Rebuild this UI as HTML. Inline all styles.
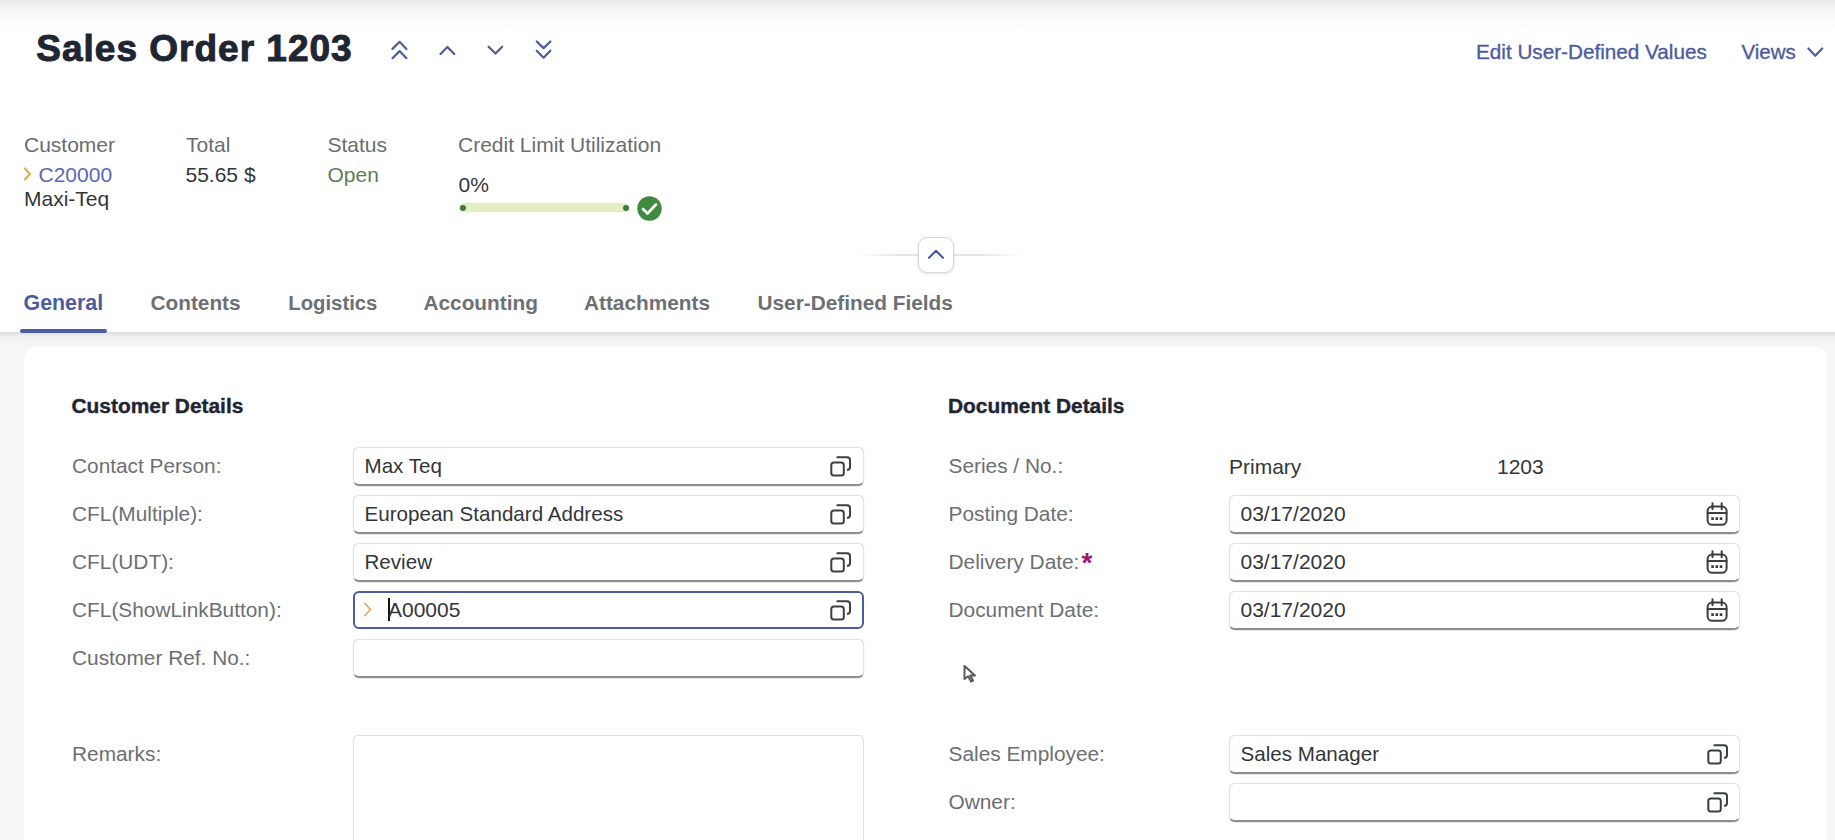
<!DOCTYPE html>
<html><head><meta charset="utf-8">
<style>
*{box-sizing:border-box;margin:0;padding:0}
html,body{width:1835px;height:840px;overflow:hidden;background:#f6f6f9;font-family:"Liberation Sans",sans-serif;color:#32363a}
.abs{position:absolute;white-space:nowrap;line-height:1}
#hdr{position:absolute;left:0;top:0;width:1835px;height:332px;background:#fff;box-shadow:0 0 3px rgba(0,0,0,.06)}
#hshadow{position:absolute;left:0;top:332px;width:1835px;height:14px;background:linear-gradient(#dcdcde 0,#e4e4e6 1.5px,#eeeef1 4px,#f3f3f6 8px,#f6f6f9 14px)}
#topgrad{position:absolute;left:0;top:0;width:1835px;height:36px;background:linear-gradient(#eaeaea 0,#ececec 3px,#f1f1f1 7px,#f7f7f7 12px,#fafafa 20px,#fdfdfd 28px,#fff 36px)}
.title{font-weight:bold;font-size:37px;color:#1f2633;left:36.3px;top:30.2px;-webkit-text-stroke:1px #1f2633;letter-spacing:1px}
.blue{color:#4c5ca0}
.med{-webkit-text-stroke:0.35px currentColor}
.kl{font-size:21px;color:#6a6d70}
.kv{font-size:21px;color:#32363a}
.tab{font-size:20.8px;font-weight:bold;color:#6c7075;top:292.5px}
#card{position:absolute;left:24px;top:346.7px;width:1803px;height:540px;background:#fff;border-radius:12px}
.sec{font-size:20.9px;font-weight:bold;color:#1f2633;top:395.5px;-webkit-text-stroke:0.4px #1f2633}
.fl{font-size:20.85px;color:#6c6f73}
.inp{position:absolute;width:511px;height:38.5px;background:#fff;border:1px solid #e2e2e2;border-bottom:2px solid #8c8e92;border-radius:6px;box-shadow:0 0 1.5px rgba(0,0,0,.1), 0 0.5px 0.5px rgba(0,0,0,.15)}
.it{font-size:21px;color:#32363a}
svg{position:absolute;overflow:visible}
</style></head><body>
<div id="hdr">
  <div id="topgrad"></div>
  <div class="abs title">Sales Order 1203</div>
  <svg style="left:0;top:0" width="600" height="80" viewBox="0 0 600 80" fill="none" stroke="#4c5ca0" stroke-width="2.2" stroke-linecap="round" stroke-linejoin="round">
    <path d="M392.5 48.9 L399.6 41.8 L406.4 48.9 M392.5 58.2 L399.6 51.1 L406.4 58.2"/>
    <path d="M440.5 54 L447.4 47 L454.3 54"/>
    <path d="M488.6 46.7 L495.5 53.5 L502.2 46.7"/>
    <path d="M536.7 41.5 L543.6 48.1 L550.4 41.5 M536.7 50.8 L543.6 57.7 L550.4 50.8"/>
  </svg>
  <div class="abs blue med" style="left:1476px;top:41.7px;font-size:20.7px">Edit User-Defined Values</div>
  <div class="abs blue med" style="left:1741.5px;top:41.7px;font-size:20.5px">Views</div>
  <svg style="left:0;top:0" width="1835" height="80" fill="none" stroke="#4c5ca0" stroke-width="2.2" stroke-linecap="round" stroke-linejoin="round">
    <path d="M1808.4 48.5 L1815.3 55.8 L1822.2 48.5"/>
  </svg>

  <div class="abs kl" style="left:24px;top:134.2px">Customer</div>
  <div class="abs kl" style="left:186px;top:134.2px">Total</div>
  <div class="abs kl" style="left:327.5px;top:134.2px">Status</div>
  <div class="abs kl" style="left:458px;top:134.2px">Credit Limit Utilization</div>

  <svg style="left:0;top:0" width="60" height="200" fill="none" stroke="#e6aa50" stroke-width="2.2" stroke-linecap="round" stroke-linejoin="round">
    <path d="M25 168.5 L30 174 L25 179.5"/>
  </svg>
  <div class="abs kv blue" style="left:38.5px;top:164.2px;color:#5869b0">C20000</div>
  <div class="abs kv" style="left:24px;top:187.6px">Maxi-Teq</div>
  <div class="abs kv" style="left:185.5px;top:164.2px">55.65 $</div>
  <div class="abs kv" style="left:327.5px;top:164.2px;color:#5e7f55">Open</div>
  <div class="abs kv" style="left:458.5px;top:173.9px">0%</div>

  <div class="abs" style="left:459px;top:203px;width:170px;height:9px;border-radius:4.5px;background:#e1efc2"></div>
  <div class="abs" style="left:460px;top:205px;width:6px;height:6px;border-radius:3px;background:#3e7a3a"></div>
  <div class="abs" style="left:623px;top:205px;width:6px;height:6px;border-radius:3px;background:#3e7a3a"></div>
  <svg style="left:0;top:0" width="700" height="240">
    <circle cx="649.5" cy="208.5" r="12.2" fill="#3f8a40"/>
    <path d="M643 209 L647.5 213.5 L656 204.5" fill="none" stroke="#fff" stroke-width="2.6" stroke-linecap="round" stroke-linejoin="round"/>
  </svg>

  <div class="abs" style="left:856px;top:254px;width:168px;height:1.5px;background:linear-gradient(90deg,rgba(230,230,232,0),#e6e6e8 25%,#e6e6e8 75%,rgba(230,230,232,0))"></div>
  <div class="abs" style="left:917.5px;top:236.5px;width:36px;height:36px;border-radius:9px;background:#fff;border:1px solid #d6d6d8;box-shadow:0 1px 3px rgba(0,0,0,.12)"></div>
  <svg style="left:0;top:0" width="1000" height="280" fill="none" stroke="#4c5ca0" stroke-width="2.2" stroke-linecap="round" stroke-linejoin="round">
    <path d="M929 257.8 L936 250.8 L943 257.8"/>
  </svg>

  <div class="abs tab blue" style="left:23.5px;color:#4c5ca0;font-size:21.4px;top:292.8px">General</div>
  <div class="abs tab" style="left:150.5px">Contents</div>
  <div class="abs tab" style="left:288.3px;font-size:20.3px;top:293px">Logistics</div>
  <div class="abs tab" style="left:423.5px">Accounting</div>
  <div class="abs tab" style="left:584px">Attachments</div>
  <div class="abs tab" style="left:757.5px">User-Defined Fields</div>
  <div class="abs" style="left:20px;top:329.3px;width:87px;height:3.7px;border-radius:2px;background:#4c5ca0;z-index:2"></div>
</div>
<div id="hshadow"></div>

<div id="card"></div>

<div class="abs sec" style="left:71.5px">Customer Details</div>
<div class="abs sec" style="left:948px">Document Details</div>

<!-- left labels -->
<div class="abs fl" style="left:72px;top:455.7px">Contact Person:</div>
<div class="abs fl" style="left:72px;top:503.7px">CFL(Multiple):</div>
<div class="abs fl" style="left:72px;top:551.7px">CFL(UDT):</div>
<div class="abs fl" style="left:72px;top:599.7px">CFL(ShowLinkButton):</div>
<div class="abs fl" style="left:72px;top:647.7px">Customer Ref. No.:</div>
<div class="abs fl" style="left:72px;top:743.7px">Remarks:</div>

<!-- left inputs -->
<div class="inp" style="left:352.5px;top:447.0px"></div>
<div class="abs it" style="left:364.5px;top:456.0px;font-size:20.6px">Max Teq</div>
<div class="inp" style="left:352.5px;top:495.0px"></div>
<div class="abs it" style="left:364.5px;top:504.0px;font-size:20.6px">European Standard Address</div>
<div class="inp" style="left:352.5px;top:543.0px"></div>
<div class="abs it" style="left:364.5px;top:552.0px;font-size:20.6px">Review</div>
<div class="inp" style="left:352.5px;top:590.7px;height:38.6px;border:2.5px solid #4c5ca0;border-radius:6px;box-shadow:none"></div>
<svg style="left:0;top:0" width="400" height="700" fill="none" stroke="#e2aa5c" stroke-width="1.8" stroke-linecap="round" stroke-linejoin="round">
  <path d="M365 603.5 L370.5 609.5 L365 615.5"/>
</svg>
<div class="abs" style="left:388px;top:598px;width:2px;height:23px;background:#111"></div>
<div class="abs it" style="left:388px;top:599.0px">A00005</div>
<div class="inp" style="left:352.5px;top:639.0px"></div>
<div class="abs" style="left:352.5px;top:735px;width:511px;height:140px;border:1px solid #e0e0e0;border-radius:5px;box-shadow:0 0 1px rgba(0,0,0,.08);background:#fff"></div>



<!-- right labels -->
<div class="abs fl" style="left:948.5px;top:455.7px">Series / No.:</div>
<div class="abs fl" style="left:948.5px;top:503.7px">Posting Date:</div>
<div class="abs fl" style="left:948.5px;top:551.7px">Delivery Date:<span style="color:#a3136b;font-weight:bold;font-size:28px;line-height:0;position:relative;top:3px;margin-left:2px;vertical-align:baseline">*</span></div>
<div class="abs fl" style="left:948.5px;top:599.7px">Document Date:</div>
<div class="abs fl" style="left:948.5px;top:743.7px">Sales Employee:</div>
<div class="abs fl" style="left:948.5px;top:791.7px">Owner:</div>

<div class="abs it" style="left:1229px;top:456.0px">Primary</div>
<div class="abs it" style="left:1497px;top:456.0px">1203</div>
<div class="inp" style="left:1228.5px;top:495.0px"></div>
<div class="abs it" style="left:1240.5px;top:503.0px">03/17/2020</div>
<div class="inp" style="left:1228.5px;top:543.0px"></div>
<div class="abs it" style="left:1240.5px;top:551.0px">03/17/2020</div>
<div class="inp" style="left:1228.5px;top:591.0px"></div>
<div class="abs it" style="left:1240.5px;top:599.0px">03/17/2020</div>
<div class="inp" style="left:1228.5px;top:735.0px"></div>
<div class="abs it" style="left:1240.5px;top:744.0px;font-size:20.6px">Sales Manager</div>
<div class="inp" style="left:1228.5px;top:783.0px"></div>

<!-- copy icons left -->
<svg style="left:0;top:0" width="1835" height="840" fill="none" stroke="#3b3e42" stroke-width="2" stroke-linejoin="round">
  <g id="cp1">
    <rect x="831.3" y="462.5" width="12.5" height="13" rx="2.5"/>
    <path d="M837.3 457.3 H847 Q850 457.3 850 460.3 V467 Q850 469.6 847.8 469.8" stroke-linecap="round"/>
  </g>
  <use href="#cp1" y="48"/>
  <use href="#cp1" y="96"/>
  <use href="#cp1" y="144"/>
  <use href="#cp1" x="877" y="288"/>
  <use href="#cp1" x="877" y="336"/>
  <g id="cal">
    <rect x="1707.6" y="506.6" width="19" height="18.2" rx="4.5"/>
    <path d="M1707.8 513 H1726.4 M1712.5 503.2 V509.2 M1721.7 503.2 V509.2" stroke-linecap="round"/>
    <path d="M1711.3 518.6 H1723.3" stroke-dasharray="2.6 1.6" stroke-width="2.6"/>
  </g>
  <use href="#cal" y="48"/>
  <use href="#cal" y="96"/>
</svg>

<!-- mouse cursor -->
<svg style="left:0;top:0" width="1835" height="840">
  <path d="M964.5 666 L964.5 679 L968.2 676.3 L971 681.5 L973 680.5 L970.4 675.5 L975 675.5 Z" fill="#fff" stroke="#5a5a5a" stroke-width="2" stroke-linejoin="round" style="filter:blur(0.4px)"/>
</svg>
</body></html>
